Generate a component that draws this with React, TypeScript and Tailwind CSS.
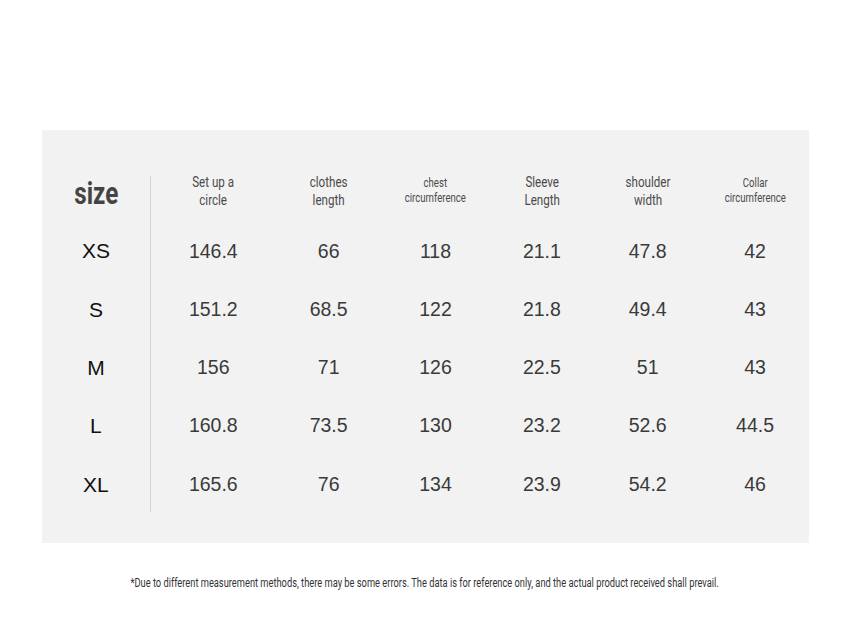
import React from "react";

const cols: { head: string[]; small?: boolean; w: string; vals: string[] }[] = [
  { head: ["Set up a", "circle"], w: "w-[125px]", vals: ["146.4", "151.2", "156", "160.8", "165.6"] },
  { head: ["clothes", "length"], w: "w-[106px]", vals: ["66", "68.5", "71", "73.5", "76"] },
  { head: ["chest", "circumference"], small: true, w: "w-[108px]", vals: ["118", "122", "126", "130", "134"] },
  { head: ["Sleeve", "Length"], w: "w-[105px]", vals: ["21.1", "21.8", "22.5", "23.2", "23.9"] },
  { head: ["shoulder", "width"], w: "w-[107px]", vals: ["47.8", "49.4", "51", "52.6", "54.2"] },
  { head: ["Collar", "circumference"], small: true, w: "w-[108px]", vals: ["42", "43", "43", "44.5", "46"] },
];

const sizes = ["XS", "S", "M", "L", "XL"];

export default function App() {
  return (
    <div className="w-[852px] h-[639px] bg-white relative font-['Liberation_Sans',Arial,sans-serif]">
      <div className="pt-[130px] pl-[42px]">
        <div className="w-[767px] h-[413px] bg-[#f2f2f2] flex pt-[32px]">
          {/* size column */}
          <div className="w-[108px] flex flex-col">
            <div className="h-[60px] flex items-center justify-center">
              <span className="inline-block scale-x-[0.78] font-['Roboto',sans-serif] font-bold text-[31px] text-[#444] leading-none mt-[3px]">
                size
              </span>
            </div>
            {sizes.map((s) => (
              <div key={s} className="h-[58.3px] flex items-center justify-center text-[21px] text-[#111]">
                {s}
              </div>
            ))}
          </div>
          <div className="w-px bg-[#d4d4d4] mt-[14px] mb-[31px]" />
          {cols.map((c, i) => (
            <div key={i} className={`${c.w} flex flex-col`}>
              <div className="h-[60px] flex items-center justify-center">
                <div
                  className={`scale-x-[0.8] text-center font-['Roboto',sans-serif] text-[#4a4a4a] ${
                    c.small ? "text-[12px] leading-[15px] -mt-[3px]" : "text-[14.5px] leading-[18px] -mt-[1px]"
                  }`}
                >
                  <div>{c.head[0]}</div>
                  <div>{c.head[1]}</div>
                </div>
              </div>
              {c.vals.map((v, j) => (
                <div key={j} className="h-[58.3px] flex items-center justify-center text-[19.5px] text-[#3a3a3a]">
                  {v}
                </div>
              ))}
            </div>
          ))}
        </div>
        <div className="w-[767px] flex justify-center mt-[32px] pr-[2px]">
          <span className="inline-block scale-x-[0.775] whitespace-nowrap font-['Roboto',sans-serif] text-[12px] text-[#333] leading-[16px]">
            *Due to different measurement methods, there may be some errors. The data is for reference only, and the actual product received shall prevail.
          </span>
        </div>
      </div>
    </div>
  );
}
